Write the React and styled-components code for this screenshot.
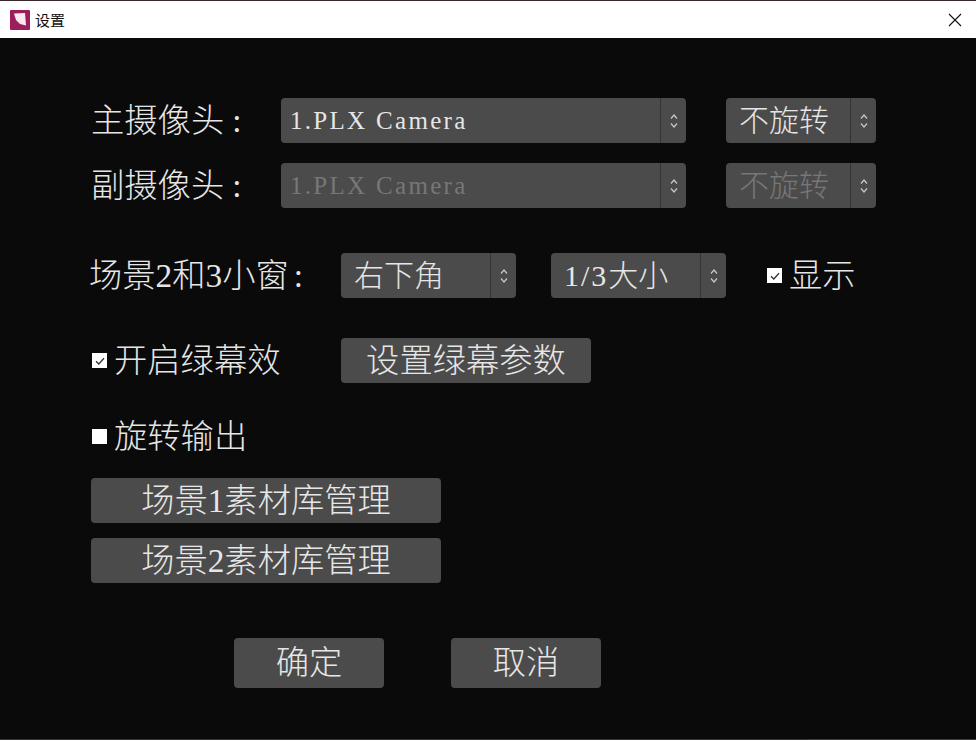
import React from 'react';
import styled, { createGlobalStyle } from 'styled-components';

const GlobalStyle = createGlobalStyle`
  html, body {
    margin: 0;
    padding: 0;
    background: #0a0a0a;
  }
`;

const cjk = `"Liberation Serif", "Noto Sans CJK SC", serif`;

const Window = styled.div`
  width: 976px;
  height: 740px;
  display: flex;
  flex-direction: column;
  overflow: hidden;
  background: #0a0a0a;
  font-family: ${cjk};
  font-weight: 300;
  color: #e6e6e6;
`;

const TitleBar = styled.header`
  height: 37px;
  flex: none;
  display: flex;
  align-items: center;
  background: #fff;
  border-top: 1px solid #3a2a30;
  padding: 0 10px;
  color: #111;
  font-family: "Noto Sans CJK SC", sans-serif;
  font-size: 15px;
  font-weight: 400;
`;

const TitleText = styled.span`
  margin-left: 5px;
  line-height: 34px;
`;

const CloseButton = styled.button`
  margin-left: auto;
  margin-right: 3px;
  width: 16px;
  height: 16px;
  padding: 0;
  border: 0;
  background: none;
  display: flex;
`;

const Body = styled.main`
  flex: 1;
  display: flex;
  flex-direction: column;
  padding: 60px 0 0 91px;
`;

const Row = styled.div`
  display: flex;
  align-items: center;
  height: ${p => p.$h || 45}px;
  margin-top: ${p => p.$top || 0}px;
`;

const Label = styled.span`
  width: ${p => p.$w}px;
  margin-left: ${p => p.$shift || 0}px;
  flex: none;
  font-size: 33.3px;
  line-height: 45px;
  white-space: nowrap;
`;

const Colon = styled.span`
  margin-left: ${p => p.$gap}px;
`;

const ComboBox = styled.div`
  width: ${p => p.$w}px;
  height: 45px;
  margin-left: ${p => p.$gap || 0}px;
  flex: none;
  display: flex;
  border-radius: 4px;
  background: #4b4b4b;
  color: ${p => (p.$disabled ? '#777' : '#e6e6e6')};
`;

const ComboValue = styled.span`
  flex: 1;
  padding-left: ${p => p.$pad}px;
  line-height: 45px;
  font-size: ${p => p.$size || 30}px;
  letter-spacing: ${p => p.$track || 0}px;
  white-space: nowrap;
`;

const Fraction = styled.span`
  letter-spacing: 2px;
`;

const ComboArrows = styled.span`
  width: 25px;
  flex: none;
  display: flex;
  align-items: center;
  justify-content: center;
  border-left: 1px solid #343434;
`;

const CheckField = styled.label`
  display: flex;
  align-items: center;
  width: ${p => (p.$w ? `${p.$w}px` : 'auto')};
  margin-left: ${p => p.$gap || 0}px;
  flex: none;
  font-size: 33.3px;
  line-height: 45px;
`;

const CheckBox = styled.span`
  width: 15px;
  height: 15px;
  margin-right: 7px;
  flex: none;
  background: #fff;
  display: flex;
  align-items: center;
  justify-content: center;
`;

const Button = styled.button`
  width: ${p => p.$w}px;
  height: ${p => p.$h || 45}px;
  margin-left: ${p => p.$gap || 0}px;
  padding: 0;
  border: 0;
  border-radius: 4px;
  flex: none;
  background: #4b4b4b;
  color: #e6e6e6;
  font-family: ${cjk};
  font-weight: 300;
  font-size: 33.3px;
  line-height: 40px;
`;

const BottomEdge = styled.footer`
  height: 1px;
  flex: none;
  display: flex;
  justify-content: flex-end;
  background: #333;
`;

const BottomAccent = styled.span`
  width: 168px;
  background: #6d1f6d;
`;

const AppIcon = () => (
  <svg width="20" height="20" viewBox="0 0 20 20">
    <rect width="20" height="20" rx="1" fill="#9c1f5c" />
    <path d="M4 3.5 L15 3 L16 15.5 L10 14 L6 10 Z" fill="#fbe9f0" />
  </svg>
);

const Close = () => (
  <svg width="16" height="16" viewBox="0 0 16 16">
    <path d="M2 2 L14 14 M14 2 L2 14" stroke="#111" strokeWidth="1.1" fill="none" />
  </svg>
);

const Arrows = () => (
  <svg width="10" height="18" viewBox="0 0 10 18">
    <path d="M2 6.5 L5 3 L8 6.5 M2 11.5 L5 15 L8 11.5" stroke="#c8c8c8" strokeWidth="1.2" fill="none" />
  </svg>
);

const Tick = () => (
  <svg width="12" height="12" viewBox="0 0 12 12">
    <path d="M2 6.2 L4.8 9 L10 3.2" stroke="#333" strokeWidth="1.3" fill="none" />
  </svg>
);

const Combo = ({ w, gap, pad, size, track, disabled, children }) => (
  <ComboBox $w={w} $gap={gap} $disabled={disabled}>
    <ComboValue $pad={pad} $size={size} $track={track}>{children}</ComboValue>
    <ComboArrows><Arrows /></ComboArrows>
  </ComboBox>
);

const App = () => (
  <Window>
    <GlobalStyle />
    <TitleBar>
      <AppIcon />
      <TitleText>设置</TitleText>
      <CloseButton><Close /></CloseButton>
    </TitleBar>
    <Body>
      <Row>
        <Label $w={190}>主摄像头<Colon $gap={8}>:</Colon></Label>
        <Combo w={405} pad={9} size={25} track={2.3}>1.PLX Camera</Combo>
        <Combo w={150} gap={40} pad={13}>不旋转</Combo>
      </Row>
      <Row $top={20}>
        <Label $w={190}>副摄像头<Colon $gap={8}>:</Colon></Label>
        <Combo w={405} pad={9} size={25} track={2.3} disabled>1.PLX Camera</Combo>
        <Combo w={150} gap={40} pad={13} disabled>不旋转</Combo>
      </Row>
      <Row $top={45}>
        <Label $w={252} $shift={-2}>场景2和3小窗<Colon $gap={5}>:</Colon></Label>
        <Combo w={175} pad={13}>右下角</Combo>
        <Combo w={175} gap={35} pad={13}><Fraction>1/3</Fraction>大小</Combo>
        <CheckField $gap={41}>
          <CheckBox><Tick /></CheckBox>显示
        </CheckField>
      </Row>
      <Row $top={40}>
        <CheckField $w={249} $gap={1}>
          <CheckBox><Tick /></CheckBox>开启绿幕效
        </CheckField>
        <Button $w={250}>设置绿幕参数</Button>
      </Row>
      <Row $top={28} $h={50}>
        <CheckField $gap={1}>
          <CheckBox />旋转输出
        </CheckField>
      </Row>
      <Row $top={17}>
        <Button $w={350}>场景1素材库管理</Button>
      </Row>
      <Row $top={15}>
        <Button $w={350}>场景2素材库管理</Button>
      </Row>
      <Row $top={55} $h={50}>
        <Button $w={150} $h={50} $gap={143}>确定</Button>
        <Button $w={150} $h={50} $gap={67}>取消</Button>
      </Row>
    </Body>
    <BottomEdge><BottomAccent /></BottomEdge>
  </Window>
);

export default App;
